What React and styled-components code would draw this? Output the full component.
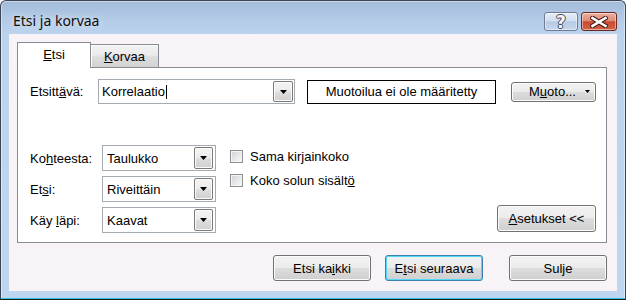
import React from 'react';
import styled, { createGlobalStyle } from 'styled-components';

const Global = createGlobalStyle`
  html, body { margin: 0; padding: 0; background: #ffffff; }
  body {
    width: 626px; height: 300px; overflow: hidden;
    font-family: "Liberation Sans", Arial, sans-serif;
    font-size: 13px; color: #000;
  }
  * { box-sizing: border-box; }
`;

const Window = styled.div`
  width: 626px;
  height: 300px;
  display: flex;
  flex-direction: column;
  border: 1px solid #3a4555;
  border-bottom-color: #1e1e1e;
  border-radius: 6px 6px 0 0;
  background: linear-gradient(to bottom, #a2bbda 0px, #b1c9e5 16px, #bcd3ee 33px, #bfd6f0 100%);
  box-shadow: inset 0 -1px 0 #2cc6df, inset 0 0 0 1px rgba(255, 255, 255, 0.45);
`;

const TitleBar = styled.div`
  height: 33px;
  flex: none;
  display: flex;
  align-items: flex-start;
  padding: 0 8px 0 12px;
`;

const Title = styled.div`
  font-family: "Noto Sans", "Open Sans", sans-serif;
  font-size: 14px;
  line-height: 20px;
  margin-top: 10px;
  color: #0c0c0c;
  text-shadow: 0 0 6px rgba(255, 255, 255, 0.9);
`;

const Caption = styled.div`
  margin-left: auto;
  margin-top: 11px;
  display: flex;
  gap: 3px;
`;

const CaptionButton = styled.div`
  width: ${p => p.$w}px;
  height: 19px;
  border-radius: 3px;
  border: 1px solid ${p => (p.$close ? '#6b2a1f' : '#6e7c93')};
  background: ${p =>
    p.$close
      ? 'linear-gradient(to bottom, #eab0a2 0%, #df8b78 45%, #c84a30 52%, #d0644a 100%)'
      : 'linear-gradient(to bottom, #e6edf7 0%, #d2deef 45%, #b7cae3 52%, #c6d8ee 100%)'};
  box-shadow: inset 0 0 0 1px rgba(255, 255, 255, 0.45);
  display: flex;
  align-items: center;
  justify-content: center;
`;

const HelpGlyph = styled.span`
  font-family: "DejaVu Sans", sans-serif;
  font-weight: bold;
  font-size: 17px;
  line-height: 17px;
  margin-top: 1px;
  color: #f4f6f9;
  text-shadow: 1px 0 #3c4a5e, -1px 0 #3c4a5e, 0 1px #3c4a5e, 0 -1px #3c4a5e;
`;

const Client = styled.div`
  flex: 1;
  margin: 0 8px 8px 8px;
  background: #f7f3f7;
  display: flex;
  flex-direction: column;
  padding: 8px 10px 0 8px;
`;

const TabStrip = styled.div`
  display: flex;
  align-items: flex-end;
  height: 25px;
`;

const Tab = styled.div`
  position: relative;
  width: ${p => (p.$active ? 74 : 69)}px;
  height: ${p => (p.$active ? 26 : 23)}px;
  margin-bottom: ${p => (p.$active ? -1 : 0)}px;
  margin-left: ${p => (p.$active ? 0 : -1)}px;
  z-index: ${p => (p.$active ? 2 : 1)};
  border: 1px solid #898c95;
  border-bottom: none;
  background: ${p =>
    p.$active ? '#ffffff' : 'linear-gradient(to bottom, #f3f3f3 0%, #ebebeb 45%, #dddddd 55%, #d3d3d3 100%)'};
  box-shadow: ${p => (p.$active ? 'none' : 'inset 1px 1px 0 #fdfdfd')};
  display: flex;
  align-items: center;
  justify-content: center;
  padding-bottom: ${p => (p.$active ? 2 : 0)}px;
`;

const Panel = styled.div`
  height: 176px;
  border: 1px solid #898c95;
  background: #ffffff;
  display: flex;
  flex-direction: column;
  justify-content: space-between;
  padding: 11px 10px 9px 12px;
`;

const FindRow = styled.div`
  display: flex;
  align-items: center;
  height: 25px;
`;

const Label = styled.div`
  width: ${p => p.$w}px;
  flex: none;
`;

const Combo = styled.div`
  width: ${p => p.$w}px;
  height: ${p => p.$h}px;
  border: 1px solid #a5abb3;
  background: #ffffff;
  display: flex;
  align-items: stretch;
`;

const ComboText = styled.div`
  flex: 1;
  display: flex;
  align-items: center;
  padding-left: ${p => p.$pad}px;
`;

const Caret = styled.span`
  display: inline-block;
  width: 1px;
  height: 14px;
  background: #000;
  margin-left: 1px;
`;

const DropButton = styled.div`
  width: ${p => p.$w}px;
  margin: ${p => p.$m};
  border: 1px solid #7a7a7a;
  border-radius: 2px;
  background: linear-gradient(to bottom, #f4f4f4 0%, #ececec 48%, #dedede 52%, #d0d0d0 100%);
  box-shadow: inset 0 0 0 1px #fbfbfb;
  display: flex;
  align-items: center;
  justify-content: center;
`;

const FormatBox = styled.div`
  width: 189px;
  height: 24px;
  margin-left: 12px;
  border: 1px solid #000;
  background: #fff;
  display: flex;
  align-items: center;
  justify-content: center;
`;

const Button = styled.div`
  width: ${p => p.$w}px;
  height: ${p => p.$h}px;
  flex: none;
  border: 1px solid ${p => (p.$default ? '#3c7fb1' : '#707070')};
  border-radius: 3px;
  background: linear-gradient(to bottom, #f2f2f2 0%, #ebebeb 50%, #dddddd 50%, #cfcfcf 100%);
  box-shadow: inset 0 0 0 1px ${p => (p.$default ? '#4fd9fb' : '#fcfcfc')};
  display: flex;
  align-items: center;
  justify-content: center;
`;

const MenuButton = styled(Button)`
  margin-left: 15px;
  justify-content: flex-start;
  padding: 0 5px 0 17px;
`;

const MenuArrow = styled.span`
  margin-left: auto;
  display: flex;
`;

const U = styled.span`
  text-decoration: underline;
  text-underline-offset: 1px;
`;

const OptionsArea = styled.div`
  display: flex;
  align-items: flex-end;
`;

const FieldGrid = styled.div`
  display: grid;
  grid-template-columns: 72px 114px;
  grid-auto-rows: 26px;
  row-gap: 5px;
  align-items: center;
`;

const CheckGroup = styled.div`
  align-self: flex-start;
  margin: 3px 0 0 14px;
  display: flex;
  flex-direction: column;
  gap: 8px;
`;

const CheckRow = styled.div`
  display: flex;
  align-items: center;
  height: 16px;
  gap: 7px;
`;

const CheckBox = styled.div`
  width: 13px;
  height: 13px;
  border: 1px solid #8f9090;
  background: linear-gradient(135deg, #cfd2d7 0%, #e6e7e9 55%, #f8f8f8 100%);
  box-shadow: inset 0 0 0 1px #f4f4f4;
`;

const OptionsButton = styled(Button)`
  margin-left: auto;
  margin-bottom: 1px;
`;

const ButtonRow = styled.div`
  display: flex;
  justify-content: flex-end;
  margin-top: 12px;
  gap: 14px;
`;

const CloseButton = styled(Button)`
  margin-left: 12px;
`;

const Arrow = ({ w = 7 }) => (
  <svg width={w} height="4" viewBox="0 0 7 4">
    <path d="M0 0 H7 L3.5 4 Z" fill="#000" />
  </svg>
);

const SmallArrow = () => (
  <svg width="5" height="3" viewBox="0 0 5 3">
    <path d="M0 0 H5 L2.5 3 Z" fill="#000" />
  </svg>
);

const CloseX = () => (
  <svg width="18" height="12" viewBox="0 0 18 12">
    <path d="M2.5 2 L15.5 10 M15.5 2 L2.5 10" stroke="#4a1a12" strokeWidth="4.6" strokeLinecap="square" />
    <path d="M2.5 2 L15.5 10 M15.5 2 L2.5 10" stroke="#ffffff" strokeWidth="2.6" strokeLinecap="square" />
  </svg>
);

const fields = [
  { label: <>Ko<U>h</U>teesta:</>, value: 'Taulukko' },
  { label: <>Et<U>s</U>i:</>, value: 'Riveittäin' },
  { label: <>Käy <U>l</U>äpi:</>, value: 'Kaavat' },
];

export default function App() {
  return (
    <>
      <Global />
      <Window>
        <TitleBar>
          <Title>Etsi ja korvaa</Title>
          <Caption>
            <CaptionButton $w={34}>
              <HelpGlyph>?</HelpGlyph>
            </CaptionButton>
            <CaptionButton $w={36} $close>
              <CloseX />
            </CaptionButton>
          </Caption>
        </TitleBar>
        <Client>
          <TabStrip>
            <Tab $active><span><U>E</U>tsi</span></Tab>
            <Tab><span><U>K</U>orvaa</span></Tab>
          </TabStrip>
          <Panel>
            <FindRow>
              <Label $w={68}>Etsitt<U>ä</U>vä:</Label>
              <Combo $w={197} $h={25}>
                <ComboText $pad={3}>Korrelaatio<Caret /></ComboText>
                <DropButton $w={20} $m="1px 1px 1px 0">
                  <Arrow />
                </DropButton>
              </Combo>
              <FormatBox>Muotoilua ei ole määritetty</FormatBox>
              <MenuButton $w={85} $h={20}>
                <span>M<U>u</U>oto...</span>
                <MenuArrow><SmallArrow /></MenuArrow>
              </MenuButton>
            </FindRow>
            <OptionsArea>
              <FieldGrid>
                {fields.map((f, i) => (
                  <React.Fragment key={i}>
                    <Label>{f.label}</Label>
                    <Combo $w={114} $h={26}>
                      <ComboText $pad={4}>{f.value}</ComboText>
                      <DropButton $w={19} $m="1px 2px 1px 0">
                        <Arrow />
                      </DropButton>
                    </Combo>
                  </React.Fragment>
                ))}
              </FieldGrid>
              <CheckGroup>
                <CheckRow>
                  <CheckBox />
                  <span>Sama kir<U>j</U>ainkoko</span>
                </CheckRow>
                <CheckRow>
                  <CheckBox />
                  <span>Koko solun sisält<U>ö</U></span>
                </CheckRow>
              </CheckGroup>
              <OptionsButton $w={99} $h={27}>
                <span><U>A</U>setukset &lt;&lt;</span>
              </OptionsButton>
            </OptionsArea>
          </Panel>
          <ButtonRow>
            <Button $w={98} $h={26}><span>Etsi ka<U>i</U>kki</span></Button>
            <Button $w={98} $h={26} $default><span>E<U>t</U>si seuraava</span></Button>
            <CloseButton $w={98} $h={26}>Sulje</CloseButton>
          </ButtonRow>
        </Client>
      </Window>
    </>
  );
}
